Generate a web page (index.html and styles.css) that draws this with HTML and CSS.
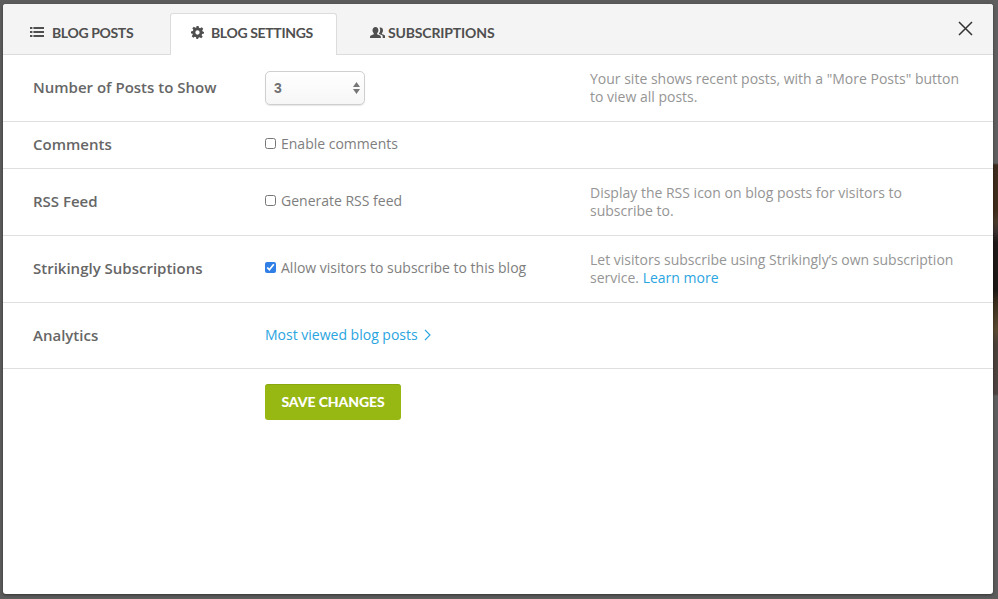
FILE: index.html
```html
<!DOCTYPE html>
<html lang="en">
<head>
<meta charset="utf-8">
<title>Blog Settings</title>
<link rel="stylesheet" href="styles.css">
</head>
<body>
<div class="modal">
  <header class="tabs">
    <a class="tab tab-posts">
      <svg class="ico" width="14" height="12" viewBox="0 0 14 12"><path fill="#4f4f4f" d="M0 1h2.400v2H0zM3.400 1H14v2H3.400zM0 5h2.400v2H0zM3.400 5H14v2H3.400zM0 9h2.400v2H0zM3.400 9H14v2H3.400z"/></svg>
      BLOG POSTS
    </a>
    <a class="tab tab-settings active">
      <svg class="ico" width="13" height="13" viewBox="0 0 24 24"><path fill="#4f4f4f" fill-rule="evenodd" d="M10 0h4l.7 3.400 2.200.9L19.800 2.400l2.800 2.800-1.900 2.900.9 2.200L24 11v3l-3.400.7-.9 2.200 1.900 2.900-2.800 2.800-2.900-1.900-2.200.9L13 24h-3l-.7-3.400-2.200-.9-2.900 1.900-2.800-2.800 1.900-2.900-.9-2.200L0 14v-4l3.400-.7.9-2.200L2.400 4.200l2.800-2.800 2.900 1.900 2.200-.9zM12 8a4 4 0 1 0 0 8 4 4 0 0 0 0-8z"/></svg>
      BLOG SETTINGS
    </a>
    <a class="tab tab-subs">
      <svg class="ico" width="15" height="13" viewBox="0 0 15 13"><path fill="#4f4f4f" d="M5.500 1C7.300 1 8.400 2.400 8.400 4.200c0 1.300-.6 2.400-1.300 3v1l3 1.400c.5.300.8.700.8 1.300V12H0v-1.100c0-.6.300-1 .8-1.300l3-1.400v-1c-.7-.6-1.300-1.700-1.300-3C2.500 2.400 3.700 1 5.500 1zM10.500 1.600c1.500 0 2.500 1.200 2.500 2.800 0 1.100-.5 2.100-1.100 2.600v.9l2.500 1.200c.4.200.6.500.6 1V12h-2.300v-1.400c0-.8-.4-1.300-1-1.600L9 8V7.300c.8-.8 1.200-1.900 1.200-3.100 0-.9-.2-1.800-.7-2.400.3-.1.600-.2 1-.2z"/></svg>
      SUBSCRIPTIONS
    </a>
    <button class="close" aria-label="Close">
      <svg width="15" height="15" viewBox="0 0 15 15"><path d="M1 1l13 13M14 1L1 14" stroke="#333" stroke-width="1.500" fill="none"/></svg>
    </button>
  </header>

  <section class="row row-posts">
    <div class="label">Number of Posts to Show</div>
    <div class="field">
      <div class="select"><span>3</span>
        <svg width="7" height="12" viewBox="0 0 7 12"><path fill="#777" d="M3.500 0L7 5H0zM3.500 12L0 7h7z"/></svg>
      </div>
    </div>
    <p class="help">Your site shows recent posts, with a "More Posts" button to view all posts.</p>
  </section>

  <section class="row row-comments">
    <div class="label">Comments</div>
    <label class="field check"><input type="checkbox"> Enable comments</label>
    <p class="help"></p>
  </section>

  <section class="row row-rss">
    <div class="label">RSS Feed</div>
    <label class="field check"><input type="checkbox"> Generate RSS feed</label>
    <p class="help">Display the RSS icon on blog posts for visitors to subscribe to.</p>
  </section>

  <section class="row row-subs">
    <div class="label">Strikingly Subscriptions</div>
    <label class="field check"><input type="checkbox" checked> Allow visitors to subscribe to this blog</label>
    <p class="help">Let visitors subscribe using Strikingly’s own subscription service. <a class="link">Learn more</a></p>
  </section>

  <section class="row row-analytics">
    <div class="label">Analytics</div>
    <div class="field field-link"><a class="link">Most viewed blog posts
      <svg class="chev" width="7" height="12" viewBox="0 0 7 12"><path d="M1 1l5 5-5 5" stroke="#2aa5e0" stroke-width="1.100" fill="none"/></svg></a></div>
    <p class="help"></p>
  </section>

  <div class="actions"><button class="save">SAVE CHANGES</button></div>
</div>
</body>
</html>
```
FILE: styles.css
```css
* { box-sizing: border-box; }
html, body { margin: 0; height: 100%; }
body {
  width: 998px;
  height: 599px;
  overflow: hidden;
  padding: 4px 5px 5px 3px;
  background-color: #5c5c5c;
  background-image: linear-gradient(#5f5f5f 0, #5f5f5f 163px, #3d2c1e 165px, #3f2d1c 210px, #4a3a2c 222px, #3a3030 232px, #1f1a18 242px, #1c1816 290px, #3a2e1e 302px, #5a4a32 330px, #4a4038 345px, #4d4442 394px, #5e5e5e 396px, #5c5c5c 599px);
  background-repeat: no-repeat;
  background-size: 5px 599px;
  background-position: right top;
  font-family: "Open Sans", sans-serif;
  color: #7e7e7e;
}
.modal {
  width: 990px;
  height: 590px;
  background: #fff;
  border-radius: 3px;
  box-shadow: 0 1px 3px rgba(0,0,0,.45);
  overflow: hidden;
}
.tabs {
  height: 51px;
  display: flex;
  align-items: flex-end;
  background: #f4f4f4;
  border-bottom: 1px solid #dcdcdc;
  position: relative;
}
.tab {
  display: flex;
  align-items: center;
  height: 42px;
  font-family: Lato, sans-serif;
  font-weight: 700;
  font-size: 14px;
  letter-spacing: -.35px;
  color: #4f4f4f;
  white-space: nowrap;
}
.tab-posts { width: 167px; padding-left: 27px; gap: 8px; height: 41px; padding-bottom: 3px; }
.tab-settings {
  width: 167px;
  padding-left: 20px;
  padding-bottom: 5px;
  gap: 7px;
  height: 42px;
  margin-bottom: -1px;
  background: #fff;
  border: 1px solid #dcdcdc;
  border-bottom: 0;
  border-radius: 3px 3px 0 0;
}
.tab-subs { padding-left: 33px; gap: 3px; height: 41px; padding-bottom: 3px; letter-spacing: -.15px; }
.close {
  position: absolute;
  right: 20px;
  top: 17px;
  padding: 0;
  border: 0;
  background: none;
  display: block;
  line-height: 0;
}
.row {
  display: flex;
  align-items: center;
  border-bottom: 1px solid #dfdfdf;
  padding-left: 30px;
}
.row-posts { height: 67px; }
.row-comments { height: 47px; }
.row-rss { height: 67px; }
.row-subs { height: 67px; }
.row-analytics { height: 66px; }
.label {
  width: 232px;
  flex: none;
  padding-bottom: 2px;
  font-size: 15px;
  font-weight: 600;
  color: #666;
}
.field {
  width: 325px;
  flex: none;
  font-size: 14px;
  color: #7e7e7e;
}
.check { display: flex; align-items: center; gap: 5px; padding-bottom: 4px; }
.field-link { padding-bottom: 2px; }
.check input { margin: 0; width: 11px; height: 11px; accent-color: #2f7fe6; }
.help {
  margin: 0;
  width: 375px;
  font-size: 14px;
  line-height: 18px;
  color: #959595;
}
.link { color: #2aa5e0; }
.chev { margin-left: 3px; vertical-align: -1px; }
.select {
  width: 100px;
  height: 34px;
  display: flex;
  align-items: center;
  justify-content: space-between;
  padding: 0 4px 0 8px;
  border: 1px solid #cfcfcf;
  border-radius: 5px;
  background: linear-gradient(#fff, #f6f6f6);
  box-shadow: 0 1px 1px rgba(0,0,0,.1);
  font-family: "Liberation Sans", sans-serif;
  font-weight: 700;
  font-size: 14px;
  color: #707070;
}
.actions { padding: 15px 0 0 262px; }
.save {
  display: block;
  width: 136px;
  height: 36px;
  padding: 0 0 3px;
  border: 0;
  border-radius: 3px;
  background: #97b712;
  border-top: 1px solid #89a80f;
  font-family: Lato, sans-serif;
  font-weight: 900;
  font-size: 14px;
  letter-spacing: -.1px;
  color: #fff;
}
```
